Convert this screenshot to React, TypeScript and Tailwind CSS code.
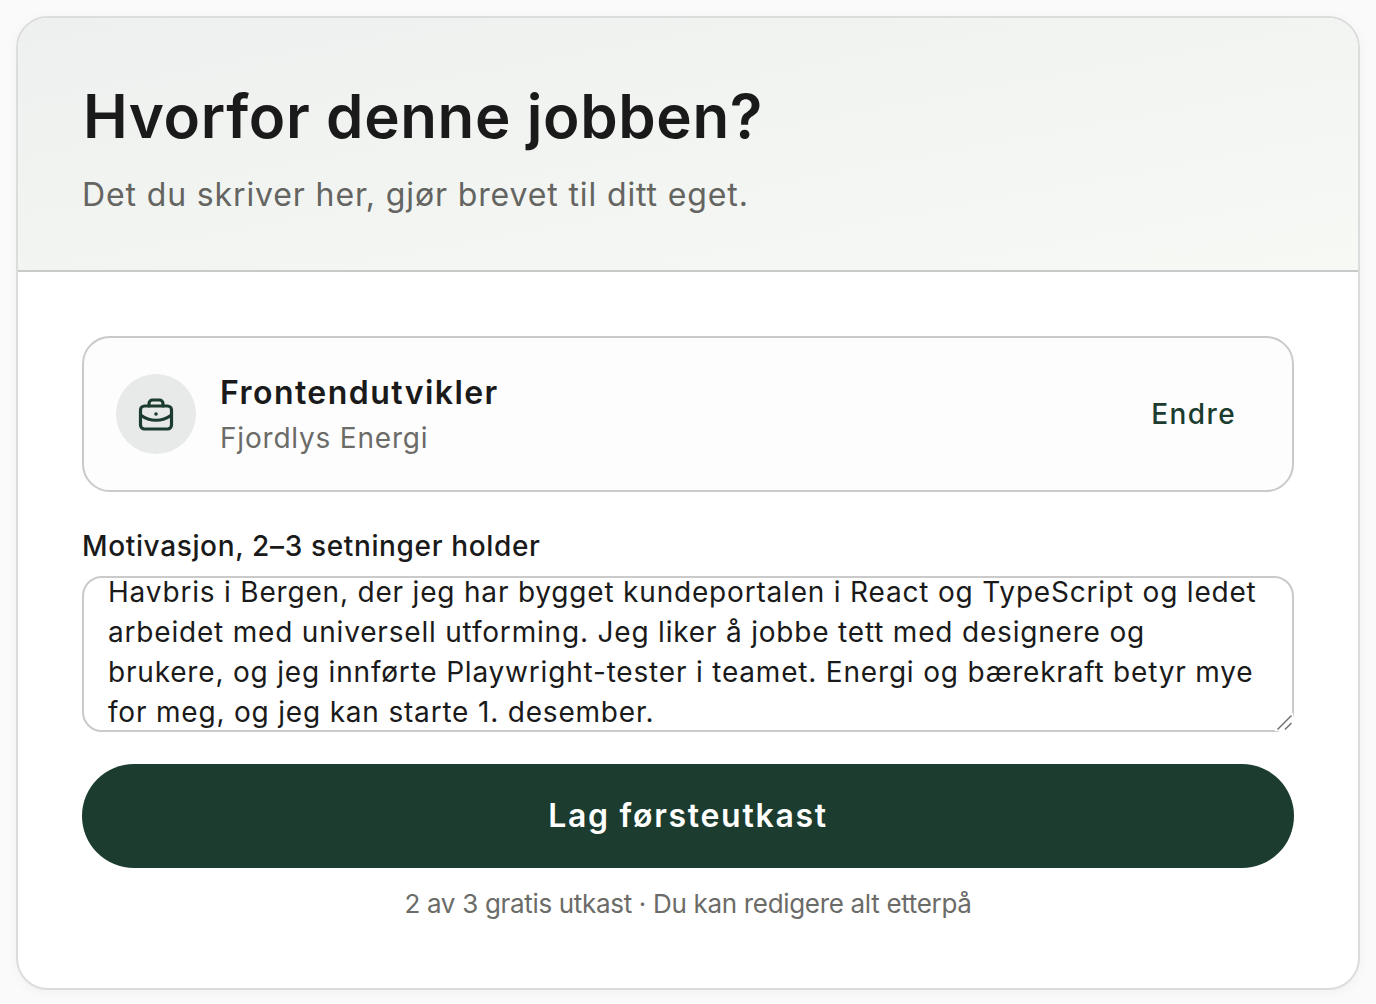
import { useEffect, useRef } from "react";

const draft = `Jeg har jobbet fem år som utvikler hos
Havbris i Bergen, der jeg har bygget kundeportalen i React og TypeScript og ledet
arbeidet med universell utforming. Jeg liker å jobbe tett med designere og
brukere, og jeg innførte Playwright-tester i teamet. Energi og bærekraft betyr mye
for meg, og jeg kan starte 1. desember.`;

function BriefcaseIcon() {
  return (
    <svg width="36" height="36" viewBox="0 0 36 36" fill="none" stroke="#1b3c2e" strokeWidth="3.2" strokeLinecap="round" strokeLinejoin="round">
      <rect x="2.500" y="10" width="31" height="23" rx="4" />
      <path d="M11 10V7.500A3.500 3.500 0 0 1 14.500 4h7A3.500 3.500 0 0 1 25 7.500V10" />
      <path d="M2.500 19C12 26 24 26 33.500 19" />
      <circle cx="18" cy="18" r="1.800" fill="#1b3c2e" stroke="none" />
    </svg>
  );
}

function ResizeHandle() {
  return (
    <svg className="pointer-events-none absolute right-[1px] bottom-[1px] bg-white" width="18" height="18" viewBox="0 0 18 18" fill="none" stroke="#6f6f6f" strokeWidth="1.500">
      <path d="M2.500 16.500L16.500 2.500" />
      <path d="M10 16.500L16.500 10" />
    </svg>
  );
}

export default function App() {
  const textareaRef = useRef<HTMLTextAreaElement>(null);

  useEffect(() => {
    if (textareaRef.current) textareaRef.current.scrollTop = 66;
  }, []);

  return (
    <div className="min-h-screen bg-[#fafafa] p-4 font-['Inter','Liberation_Sans',sans-serif] text-[#1a1a1a]">
      <div className="h-[974px] overflow-hidden rounded-[32px] border-2 border-[#dcdcdc] bg-white shadow-[0_2px_12px_rgba(0,0,0,0.04)]">
        {/* Header */}
        <div className="h-[254px] border-b-2 border-[#c8c9c8] bg-gradient-to-br from-[#eef0ef] to-[#f6f9f4] px-[64px] pt-[62px]">
          <h1 className="pl-[1px] text-[60px] leading-[72px] font-semibold tracking-[0.62px]">Hvorfor denne jobben?</h1>
          <p className="mt-[21px] text-[32px] leading-[44px] tracking-[0.87px] text-[#646461]">Det du skriver her, gjør brevet til ditt eget.</p>
        </div>

        <div className="px-[64px] pt-[64px]">
          {/* Selected job */}
          <div className="flex h-[156px] items-center justify-between rounded-[28px] border-2 border-[#c9cac9] bg-[#fdfdfd] pr-[56px] pl-[32px]">
            <div className="flex items-center gap-[24px]">
              <div className="flex h-[80px] w-[80px] items-center justify-center rounded-full bg-[#e8eae9]">
                <BriefcaseIcon />
              </div>
              <div className="pt-[3px]">
                <p className="text-[32px] leading-[44px] font-semibold tracking-[1.45px]">Frontendutvikler</p>
                <p className="mt-[1px] text-[28px] leading-[44px] tracking-[0.8px] text-[#6b6b68]">Fjordlys Energi</p>
              </div>
            </div>
            <span className="text-[28px] font-medium tracking-[1.4px] text-[#1b3c2e]">Endre</span>
          </div>

          {/* Motivation */}
          <label className="mt-[36px] block text-[28px] leading-[36px] font-medium tracking-[0.64px]">Motivasjon, 2–3 setninger holder</label>
          <div className="relative mt-[12px]">
            <textarea
              ref={textareaRef}
              readOnly
              wrap="off"
              value={draft}
              className="block h-[156px] w-full resize-none overflow-hidden rounded-[20px] border-2 border-[#c9cac9] bg-white px-[24px] py-[20px] text-[28px] leading-[40px] tracking-[0.81px] text-[#1a1a1a] outline-none"
            />
            <ResizeHandle />
          </div>

          <button className="mt-[32px] h-[104px] w-full rounded-[52px] bg-[#1b3c2e] text-[32px] font-semibold tracking-[1.7px] text-white">Lag førsteutkast</button>
          <p className="mt-[18px] text-center text-[26px] leading-[36px] tracking-[-0.32px] text-[#6b6b68]">2 av 3 gratis utkast · Du kan redigere alt etterpå</p>
        </div>
      </div>
    </div>
  );
}
